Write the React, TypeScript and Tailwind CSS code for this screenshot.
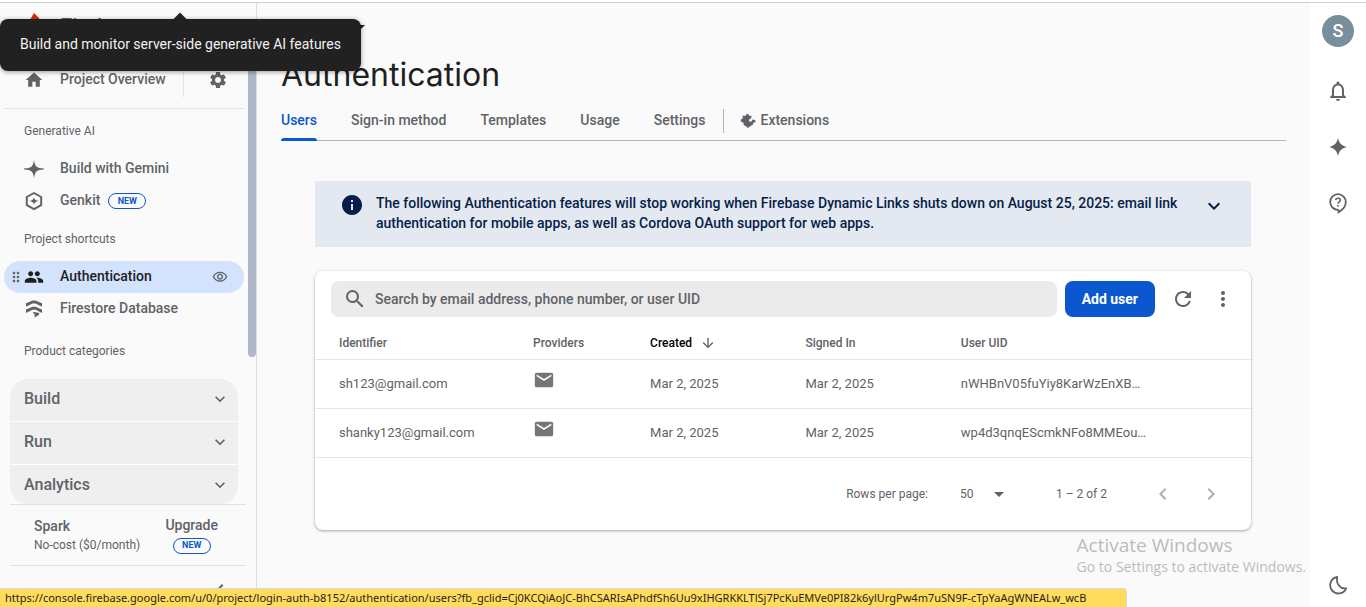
import React from "react";
import {
  MdArrowDownward,
  MdArrowDropDown,
  MdChevronLeft,
  MdChevronRight,
  MdDragIndicator,
  MdEmail,
  MdExpandMore,
  MdHome,
  MdInfo,
  MdMoreVert,
  MdNotificationsNone,
  MdOutlineVisibility,
  MdPeople,
  MdRefresh,
  MdSearch,
  MdSettings,
} from "react-icons/md";

type IconProps = { className?: string };

const SparkIcon = ({ className }: IconProps) => (
  <svg viewBox="0 0 24 24" fill="currentColor" className={className} aria-hidden="true">
    <path d="M12 3c1.300 5.500 3.500 7.700 9 9-5.500 1.300-7.700 3.500-9 9-1.300-5.500-3.500-7.700-9-9 5.500-1.300 7.700-3.500 9-9z" />
  </svg>
);

const GeminiIcon = ({ className }: IconProps) => (
  <svg viewBox="0 0 20 20" fill="currentColor" className={className} aria-hidden="true">
    <path d="M10 1c.5 3.300 1.200 5.300 2.400 6.500C13.700 8.800 16 9.300 20 9.500v1c-4 .2-6.300.7-7.600 2C11.200 13.700 10.500 15.700 10 19c-.5-3.300-1.200-5.300-2.400-6.500C6.300 11.200 4 10.700 0 10.500v-1c4-.2 6.300-.7 7.600-2C8.800 6.300 9.500 4.300 10 1z" />
  </svg>
);

const GenkitIcon = ({ className }: IconProps) => (
  <svg viewBox="0 0 20 20" className={className} aria-hidden="true">
    <path d="M10 2l7.200 4v8.200L10 18.200l-7.200-4V6z" fill="none" stroke="currentColor" strokeWidth="2" strokeLinejoin="round" />
    <path d="M10 6.200c.5 2.400 1.500 3.300 4.600 3.900-3.100.6-4.100 1.500-4.600 3.900-.5-2.400-1.500-3.300-4.600-3.900 3.100-.6 4.100-1.500 4.600-3.900z" fill="currentColor" />
  </svg>
);

const FirestoreIcon = ({ className }: IconProps) => (
  <svg viewBox="0 0 20 20" fill="currentColor" className={className} aria-hidden="true">
    <path d="M2 4.300L8.500 1.500h3L18 4.300v3.400L11.500 4.600h-3L2 7.700z" />
    <path d="M2 10.500l6.500-2.800h3l6.500 2.800v3.400l-6.500-3.100h-3L2 13.900z" />
    <path d="M8.500 12.800l7 1.200-1 2.200-3.800 2.300v-2.700z" />
  </svg>
);

const ExtensionIcon = ({ className }: IconProps) => (
  <svg viewBox="0 0 16 16" fill="currentColor" className={className} aria-hidden="true">
    <path d="M2.500 2.500l2.800.6.600-1.300c.9-1 2.600-.9 3.200.3l.2 1 2.200-.4-.3 2.600-1.300.6a1.500 1.500 0 1 0 1.900 2l.9-1.600 1.500.6c.8 0 1.500.6 1.400 1.400-.1.700-.7 1.200-1.400 1.200l-.7.3-.8 1.900-3 1.700L8 15l-2.200-1.800-2.300-1.500v-1.900l-1.300-.6A1.700 1.700 0 0 1 1.600 6l1.300-.7z" />
  </svg>
);

const SupportIcon = ({ className }: IconProps) => (
  <svg viewBox="0 0 24 24" fill="none" stroke="currentColor" className={className} aria-hidden="true">
    <path d="M12.500 18.500v2.700c4.200-2.200 7.300-6 7.300-10.100a7.800 7.800 0 1 0-7.800 7.700h.5" strokeWidth="1.800" />
    <path d="M9.700 9.200A2.300 2.300 0 0 1 12 7.200c1.400 0 2.300.9 2.300 2 0 1.600-2.300 1.900-2.300 3.500" strokeWidth="1.600" />
    <path d="M12 13.900v1.700" strokeWidth="1.700" />
  </svg>
);

const MoonIcon = ({ className }: IconProps) => (
  <svg viewBox="0 0 24 24" fill="none" stroke="currentColor" strokeWidth="1.800" strokeLinejoin="round" className={className} aria-hidden="true">
    <path d="M11.200 4A8.300 8.300 0 1 0 20.200 15.300C14.500 16.400 9.800 10.800 11.200 4z" />
  </svg>
);

const NewBadge = () => (
  <span className="flex h-4 w-[38px] items-center justify-center rounded-full border border-[#0b57d0] text-[9px] font-bold text-[#0b57d0]">
    NEW
  </span>
);

const navItem = "flex h-8 items-center text-sm font-medium";
const sectionLabel = "pl-5 text-xs leading-4 text-[#5f6368]";

const categories = ["Build", "Run", "Analytics"];
const tabs = ["Sign-in method", "Templates", "Usage", "Settings"];
const users = [
  { id: "sh123@gmail.com", created: "Mar 2, 2025", signedIn: "Mar 2, 2025", uid: "nWHBnV05fuYiy8KarWzEnXB…" },
  { id: "shanky123@gmail.com", created: "Mar 2, 2025", signedIn: "Mar 2, 2025", uid: "wp4d3qnqEScmkNFo8MMEou…" },
];

function Sidebar() {
  return (
    <aside className="flex w-[257px] shrink-0 flex-col border-r border-[#dadce0] text-[#5f6368]">
      <a href="#" className="flex h-[60px] shrink-0 items-start gap-4 pt-2.5 pl-6">
        <svg viewBox="0 0 20 28" className="h-7 w-5" aria-hidden="true">
          <path d="M10 0l5 5 4 10-4 11H5L1 15z" fill="#dd2c00" />
          <path d="M5 26L3 14l7-5 6 8-2 9z" fill="#ff9100" />
        </svg>
        <span className="text-[22px] leading-7 font-medium">Firebase</span>
      </a>
      <div className="flex min-h-0 flex-1 overflow-hidden">
        <nav className="flex min-w-0 flex-1 flex-col px-1">
          <div className="flex h-[46px] shrink-0 items-start border-b border-[#e0e2e6]">
            <a href="#" className="flex h-[34px] w-[180px] items-center gap-4 border-r border-[#e0e2e6] pl-5 text-sm font-medium">
              <MdHome className="size-5" />
              <span className="pb-0.5">Project Overview</span>
            </a>
            <button aria-label="Project settings" className="ml-6 flex h-[34px] items-center">
              <MdSettings className="size-5" />
            </button>
          </div>
          <h2 className={`mt-3.5 ${sectionLabel}`}>Generative AI</h2>
          <div className="mt-3.5 shrink-0">
            <a href="#" className={`${navItem} gap-4 pl-5`}>
              <GeminiIcon className="size-5" />
              <span className="pb-0.5">Build with Gemini</span>
            </a>
            <a href="#" className={`${navItem} pl-5`}>
              <GenkitIcon className="mr-4 size-5" />
              <span className="mr-2 pb-0.5">Genkit</span>
              <NewBadge />
            </a>
          </div>
          <h2 className={`mt-3.5 ${sectionLabel}`}>Project shortcuts</h2>
          <div className="mt-3.5 shrink-0">
            <div className={`${navItem} rounded-full bg-[#d3e3fd] pr-4 pl-1 text-[#1f1f1f]`}>
              <MdDragIndicator className="size-4 text-[#5f6368]" />
              <a href="#" className="flex flex-1 items-center gap-4">
                <MdPeople className="size-5" />
                <span className="pb-0.5">Authentication</span>
              </a>
              <button aria-label="Visibility">
                <MdOutlineVisibility className="size-4 text-[#5f6368]" />
              </button>
            </div>
            <a href="#" className={`${navItem} gap-4 pl-5`}>
              <FirestoreIcon className="size-5" />
              <span className="pb-0.5">Firestore Database</span>
            </a>
          </div>
          <h2 className={`mt-[18px] ${sectionLabel}`}>Product categories</h2>
          <div className="mx-1.5 mt-5 flex flex-col gap-px overflow-hidden rounded-[18px] bg-white">
            {categories.map((name) => (
              <button key={name} className="flex h-[42px] shrink-0 items-center justify-between bg-[#efefef] pr-2 pb-0.5 pl-3.5 text-base font-medium">
                {name}
                <MdExpandMore className="size-5" />
              </button>
            ))}
          </div>
        </nav>
        <div className="h-[294px] w-2 shrink-0 rounded-full bg-[#afb8c8]" />
      </div>
      <div className="mx-2.5 flex h-[62px] shrink-0 justify-between border-y border-[#dde1e8] pr-7 pl-6">
        <div className="pt-3">
          <p className="text-sm leading-[18px] font-medium">Spark</p>
          <p className="text-xs leading-5">No-cost ($0/month)</p>
        </div>
        <a href="#" className="flex flex-col items-center gap-1 pt-3">
          <span className="text-sm leading-[17px] font-medium">Upgrade</span>
          <NewBadge />
        </a>
      </div>
      <div className="flex h-[41px] shrink-0 justify-end pt-3 pr-6">
        <button aria-label="Collapse menu" className="h-6">
          <MdChevronLeft className="size-6" />
        </button>
      </div>
    </aside>
  );
}

function UsersCard() {
  return (
    <section className="mt-6 mr-[35px] ml-[34px] rounded-lg bg-white shadow-[0_1px_3px_rgba(0,0,0,0.35)]">
      <div className="flex items-center pt-2.5 pr-2 pl-4">
        <label className="mr-2 flex h-9 flex-1 items-center rounded-lg bg-[#ebebeb] pl-3">
          <MdSearch className="mr-2 size-6 shrink-0 text-[#5f6368]" />
          <input
            type="search"
            aria-label="Search users"
            placeholder="Search by email address, phone number, or user UID"
            className="w-full bg-transparent text-sm font-medium outline-none placeholder:text-[#5f6368]"
          />
        </label>
        <button className="mr-2 h-9 rounded-lg bg-[#0b57d0] px-[17px] text-sm font-bold text-white">Add user</button>
        <button aria-label="Refresh" className="flex h-9 w-10 items-center justify-center text-[#5f6368]">
          <MdRefresh className="size-6" />
        </button>
        <button aria-label="More options" className="flex h-9 w-10 items-center justify-center text-[#5f6368]">
          <MdMoreVert className="size-6" />
        </button>
      </div>
      <table className="mt-2.5 w-full table-fixed text-left text-[13px] text-[#5f6368]">
        <colgroup>
          <col className="w-[23.3%]" />
          <col className="w-[12.5%]" />
          <col className="w-[16.6%]" />
          <col className="w-[16.6%]" />
          <col />
        </colgroup>
        <thead>
          <tr className="h-8 border-b border-[#e3e6ea] text-xs">
            <th className="pl-6 font-medium">Identifier</th>
            <th className="font-medium">Providers</th>
            <th className="font-medium text-black" aria-sort="descending">
              <span className="flex items-center gap-2">
                Created
                <MdArrowDownward className="size-4 text-[#5f6368]" />
              </span>
            </th>
            <th className="font-medium">Signed In</th>
            <th className="font-medium">User UID</th>
          </tr>
        </thead>
        <tbody>
          {users.map((user) => (
            <tr key={user.id} className="h-[49px] border-b border-[#e3e6ea]">
              <td className="pl-6">{user.id}</td>
              <td className="pb-2">
                <MdEmail className="size-[22px] text-[#757575]" title="Email/Password" />
              </td>
              <td>{user.created}</td>
              <td>{user.signedIn}</td>
              <td>{user.uid}</td>
            </tr>
          ))}
        </tbody>
      </table>
      <div className="flex h-[72px] items-center justify-end pr-4 text-xs text-[#5f6368]">
        <label htmlFor="page-size" className="mr-8">Rows per page:</label>
        <div className="relative mr-12 w-12">
          <select id="page-size" defaultValue="50" className="w-full appearance-none bg-transparent">
            <option>50</option>
            <option>100</option>
            <option>250</option>
          </select>
          <MdArrowDropDown className="pointer-events-none absolute -top-1 -right-[3px] size-6" />
        </div>
        <span className="mr-8">1 – 2 of 2</span>
        <button aria-label="Previous page" disabled className="flex size-12 items-center justify-center text-[#afafaf]">
          <MdChevronLeft className="size-6" />
        </button>
        <button aria-label="Next page" disabled className="flex size-12 items-center justify-center text-[#afafaf]">
          <MdChevronRight className="size-6" />
        </button>
      </div>
    </section>
  );
}

export default function App() {
  return (
    <div className="relative flex h-screen flex-col overflow-hidden bg-white pt-0.5 font-['Roboto',sans-serif]">
      <div className="flex min-h-0 flex-1 border-t border-[#cfcfcf] bg-[#fafafa]">
        <Sidebar />
        <main className="min-w-0 flex-1 px-6">
          <button className="mt-2.5 flex h-7 items-center text-sm font-medium text-[#041e49]">
            login-auth
            <MdArrowDropDown className="ml-1 size-6" />
          </button>
          <h1 className="mt-3.5 font-['Inter',sans-serif] text-[32px] leading-10 text-[#1f1f1f]">Authentication</h1>
          <div className="mt-1.5 flex h-10 items-center border-b border-[#a9b4c4] text-sm font-medium text-[#5f6368]">
            <a href="#" className="relative flex h-10 items-center pb-0.5 text-[#0b57d0]">
              Users
              <span className="absolute inset-x-0 bottom-0 h-[3px] rounded-t-sm bg-[#0b57d0]" />
            </a>
            {tabs.map((tab) => (
              <a key={tab} href="#" className="ml-[34px] pb-0.5">{tab}</a>
            ))}
            <a href="#" className="ml-[18px] flex h-6 items-center gap-1 border-l border-[#a9b4c4] pl-4">
              <ExtensionIcon className="size-4" />
              <span className="pb-0.5">Extensions</span>
            </a>
          </div>
          <div className="mt-10 mr-[35px] ml-[34px] flex h-[66px] items-start bg-[#e4e9f1] px-[25px] pt-3 text-sm leading-5 font-medium text-[#041e49]">
            <MdInfo className="size-6 shrink-0" />
            <p className="ml-3 flex-1">
              The following Authentication features will stop working when Firebase Dynamic Links shuts down on August 25, 2025: email link authentication for mobile apps, as well as Cordova OAuth support for web apps.
            </p>
            <button aria-label="Expand details" className="ml-3 pt-px">
              <MdExpandMore className="size-6" />
            </button>
          </div>
          <UsersCard />
        </main>
        <div className="flex w-14 shrink-0 flex-col items-center gap-8 bg-white pt-3 pb-2.5 text-[#5f6368]">
          <button aria-label="Account" className="size-8 rounded-full bg-[#78909c] text-lg font-medium text-white">S</button>
          <button aria-label="Notifications">
            <MdNotificationsNone className="size-6" />
          </button>
          <button aria-label="Gemini">
            <SparkIcon className="size-6" />
          </button>
          <button aria-label="Help">
            <SupportIcon className="size-6" />
          </button>
          <button aria-label="Dark theme" className="mt-auto">
            <MoonIcon className="size-6" />
          </button>
        </div>
      </div>

      <div role="tooltip" className="absolute top-[19px] left-0 flex h-[52px] items-center rounded-lg bg-[#212121] px-5 pb-0.5 text-sm text-[#f1f1f1] shadow-[0_1px_5px_rgba(0,0,0,0.4)]">
        <span className="absolute -top-1 left-1/2 size-3 -translate-x-1/2 rotate-45 bg-[#212121]" />
        Build and monitor server-side generative AI features
      </div>

      <div className="pointer-events-none absolute right-[60px] bottom-[30px] font-['Open_Sans',sans-serif] text-[#bcbcbc]">
        <p className="text-[19px] leading-6">Activate Windows</p>
        <p className="text-sm leading-5">Go to Settings to activate Windows.</p>
      </div>

      <div className="absolute bottom-0 left-0 flex h-[19px] items-center rounded-tr border-t border-r border-[#d5dade] bg-[#ffdc5b] pr-10 pl-[5px] font-['Noto_Sans',sans-serif] text-[11px] text-[#1f1f1f]">
        https://console.firebase.google.com/u/0/project/login-auth-b8152/authentication/users?fb_gclid=Cj0KCQiAoJC-BhCSARIsAPhdfSh6Uu9xIHGRKKLTlSj7PcKuEMVe0PI82k6ylUrgPw4m7uSN9F-cTpYaAgWNEALw_wcB
      </div>
    </div>
  );
}
